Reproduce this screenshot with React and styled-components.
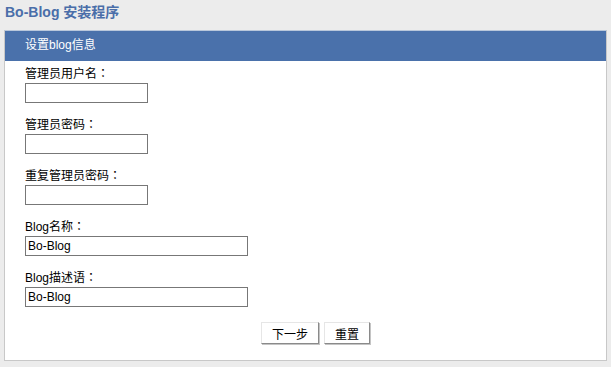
import { createGlobalStyle, styled } from "styled-components";

const GlobalStyle = createGlobalStyle`
  html, body {
    margin: 0;
    padding: 0;
    background: #ececec;
  }
  body {
    font-family: "Liberation Sans", "Noto Sans CJK SC", sans-serif;
    font-size: 12px;
    color: #000;
  }
`;

const Page = styled.div`
  display: flex;
  flex-direction: column;
  padding: 0 4px 5px 4px;
`;

const Title = styled.h1`
  margin: 0;
  height: 30px;
  line-height: 25px;
  padding-left: 1px;
  font-size: 14px;
  font-weight: bold;
  color: #4a6ea9;
`;

const Panel = styled.div`
  background: #fff;
  border: 1px solid #c8c8c8;
  border-top-color: #b9c7db;
  display: flex;
  flex-direction: column;
`;

const PanelHeader = styled.div`
  height: 30px;
  line-height: 28px;
  background: #4a71ab;
  color: #fff;
  padding-left: 20px;
`;

const Form = styled.form`
  display: flex;
  flex-direction: column;
  padding: 5px 0 16px 20px;
`;

const Field = styled.div`
  display: flex;
  flex-direction: column;
  align-items: flex-start;
  margin-bottom: 14px;
`;

const Label = styled.label`
  display: block;
  height: 17px;
  line-height: 17px;
  overflow: visible;
`;

const Colon = styled.span`
  font-family: "Noto Sans CJK TC", sans-serif;
  line-height: 1;
`;

const Input = styled.input`
  box-sizing: border-box;
  width: ${(p) => (p.$wide ? "223px" : "123px")};
  height: 20px;
  margin: 0;
  padding: 0 2px;
  border: 1px solid #777;
  font-family: "Liberation Sans", "Noto Sans CJK SC", sans-serif;
  font-size: 12px;
  color: #000;
  outline: none;
`;

const Buttons = styled.div`
  display: flex;
  justify-content: center;
  gap: 5px;
  margin-top: 1px;
`;

const Button = styled.button`
  height: 22px;
  padding: 0 10px;
  background: #fff;
  border: 1px solid;
  border-color: #e6e6e6 #8a8a8a #8a8a8a #e6e6e6;
  box-shadow: 1px 1px 0 #c4c4c4;
  font-family: "Liberation Sans", "Noto Sans CJK SC", sans-serif;
  font-size: 12px;
  color: #000;
  cursor: pointer;
`;

const fields = [
  { label: "管理员用户名", value: "" },
  { label: "管理员密码", value: "", type: "password" },
  { label: "重复管理员密码", value: "", type: "password" },
  { label: "Blog名称", value: "Bo-Blog", wide: true },
  { label: "Blog描述语", value: "Bo-Blog", wide: true },
];

export default function App() {
  return (
    <>
      <GlobalStyle />
      <Page>
        <Title>Bo-Blog 安装程序</Title>
        <Panel>
          <PanelHeader>设置blog信息</PanelHeader>
          <Form onSubmit={(e) => e.preventDefault()}>
            {fields.map((f, i) => (
              <Field key={i}>
                <Label>
                  {f.label}
                  <Colon>：</Colon>
                </Label>
                <Input
                  type={f.type || "text"}
                  defaultValue={f.value}
                  $wide={f.wide}
                />
              </Field>
            ))}
            <Buttons>
              <Button type="submit">下一步</Button>
              <Button type="reset">重置</Button>
            </Buttons>
          </Form>
        </Panel>
      </Page>
    </>
  );
}
